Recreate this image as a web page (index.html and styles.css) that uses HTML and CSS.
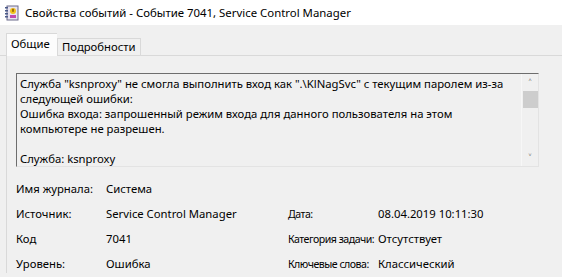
FILE: index.html
```html
<!DOCTYPE html>
<html lang="ru">
<head>
  <meta charset="UTF-8">
  <title>Свойства событий</title>
  <link rel="stylesheet" href="styles.css">
</head>
<body>
  <!-- Заголовок окна -->
  <div class="titlebar">
    <svg class="app-icon" width="16" height="16" viewBox="0 0 16 16">
      <rect x="3" y="1" width="11" height="14" fill="#e8e4f0" stroke="#6b6b8a"/>
      <rect x="1" y="2" width="3" height="1.5" fill="#4a5a8a"/>
      <rect x="1" y="5" width="3" height="1.5" fill="#4a5a8a"/>
      <rect x="1" y="8" width="3" height="1.5" fill="#4a5a8a"/>
      <rect x="1" y="11" width="3" height="1.5" fill="#4a5a8a"/>
      <circle cx="9" cy="6" r="3" fill="#f2c21b"/>
      <rect x="8.4" y="3.8" width="1.2" height="3" fill="#6a3a00"/>
      <rect x="6" y="10" width="6" height="3" fill="#c04ab0"/>
    </svg>
    <span class="title-text">Свойства событий - Событие 7041, Service Control Manager</span>
  </div>

  <!-- Вкладки -->
  <div class="tabs">
    <div class="tab tab-active">Общие</div>
    <div class="tab">Подробности</div>
  </div>

  <div class="panel">
    <div class="message-box">
      <div class="message-text">
        <p>Служба "ksnproxy" не смогла выполнить вход как ".\KlNagSvc" с текущим паролем из-за следующей ошибки:</p>
        <p>Ошибка входа: запрошенный режим входа для данного пользователя на этом компьютере не разрешен.</p>
        <p>&nbsp;</p>
        <p>Служба: ksnproxy</p>
      </div>
      <div class="scrollbar">
        <span class="arrow">&#x02C4;</span>
        <div class="thumb"></div>
        <span class="spacer"></span>
        <span class="arrow">&#x02C5;</span>
      </div>
    </div>

    <div class="fields">
      <span>Имя журнала:</span><span>Система</span><span></span><span></span>
      <span>Источник:</span><span>Service Control Manager</span><span class="label2">Дата:</span><span>08.04.2019 10:11:30</span>
      <span>Код</span><span>7041</span><span class="label2">Категория задачи:</span><span>Отсутствует</span>
      <span>Уровень:</span><span>Ошибка</span><span class="label2">Ключевые слова:</span><span>Классический</span>
    </div>
  </div>
</body>
</html>
```

FILE: styles.css
```css
/* Общие стили */
body {
  margin: 0;
  background-color: #f0f0f0;
  font-family: "Noto Sans", sans-serif;
  font-size: 11.3px;
  color: #000;
  overflow: hidden;
}

/* Заголовок окна */
.titlebar {
  height: 25px;
  background-color: #fff;
  display: flex;
  align-items: center;
  padding-left: 4px;
}

.app-icon {
  margin-right: 5px;
}

.title-text {
  font-size: 11.4px;
}

/* Вкладки */
.tabs {
  display: flex;
  align-items: flex-end;
  padding: 8px 0 0 6px;
  border-bottom: 1px solid #d9d9d9;
  height: 22px;
}

.tab {
  height: 16px;
  line-height: 16px;
  padding: 0 4px;
  border: 1px solid #d9d9d9;
  border-bottom: none;
  background-color: #f0f0f0;
}

.tab-active {
  width: 42px;
  height: 22px;
  line-height: 20px;
  padding: 0 4px;
  background-color: #fcfcfc;
  border-right: none;
  margin-bottom: -1px;
}

/* Панель */
.panel {
  border-left: 1px solid #d9d9d9;
  margin-left: 6px;
  padding: 17px 0 0 9px;
  height: 200px;
}

.message-box {
  display: flex;
  width: 521px;
  height: 92px;
  border-top: 1px solid #6d6d6d;
  border-left: 1px solid #6d6d6d;
  border-right: 1px solid #e3e3e3;
  border-bottom: 1px solid #e3e3e3;
}

.message-text {
  flex: 1;
  padding: 2px 0 0 3px;
  line-height: 15px;
  overflow: hidden;
}

.message-text p {
  margin: 0;
}

.scrollbar {
  width: 16px;
  display: flex;
  flex-direction: column;
  align-items: center;
  border-left: 1px solid #f7f7f7;
  background-color: #f0f0f0;
}

.arrow {
  height: 17px;
  line-height: 17px;
  font-size: 11px;
  color: #606060;
}

.thumb {
  width: 15px;
  height: 17px;
  background-color: #cdcdcd;
}

.spacer {
  flex: 1;
}

/* Поля события */
.fields {
  display: grid;
  grid-template-columns: 90px 182px 90px auto;
  grid-auto-rows: 25px;
  align-items: center;
  margin-top: 9px;
  white-space: nowrap;
}

.label2 {
  font-size: 10.6px;
  letter-spacing: -0.5px;
}
```
